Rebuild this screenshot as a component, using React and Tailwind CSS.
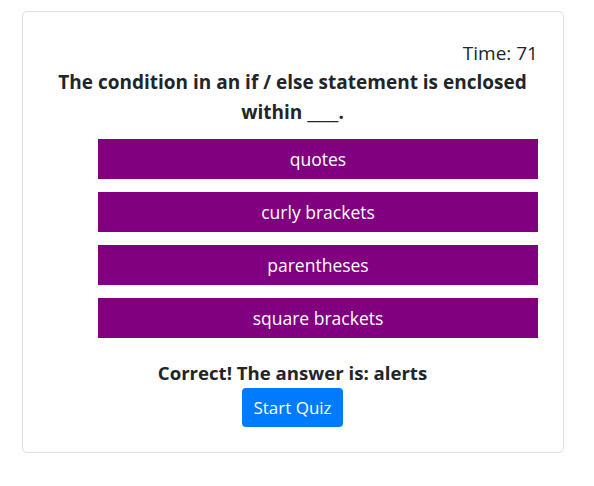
export default function App() {
  const answers = ["quotes", "curly brackets", "parentheses", "square brackets"];
  return (
    <div className="bg-white w-[594px] h-[486px] pt-[11px] pl-[22px]" style={{ fontFamily: '"Segoe UI", "Open Sans", sans-serif' }}>
      <div className="w-[542px] h-[442px] border border-[#dfdfdf] rounded-[5px] pl-[24px] pr-[25px] pt-[28px]">
        <div className="text-right text-[19px] leading-[27px] text-[#212529]">Time: 71</div>
        <div className="text-center font-bold text-[19px] leading-[30px] text-[#212529] px-[10px]">
          The condition in an if / else statement is enclosed within ____.
        </div>
        <div className="flex flex-col gap-[13px] mt-[12px] ml-[51px]">
          {answers.map((a) => (
            <div key={a} className="h-[40px] bg-[#800080] text-white text-[17.5px] flex items-center justify-center">
              {a}
            </div>
          ))}
        </div>
        <div className="flex flex-col items-center mt-[21px]">
          <div className="font-bold text-[18.6px] leading-[28px] text-[#212529]">Correct! The answer is: alerts</div>
          <div className="h-[39px] mt-[1px] px-[11px] bg-[#007bff] text-white text-[17px] leading-[27px] rounded-[4px] flex items-center">Start Quiz</div>
        </div>
      </div>
    </div>
  );
}
